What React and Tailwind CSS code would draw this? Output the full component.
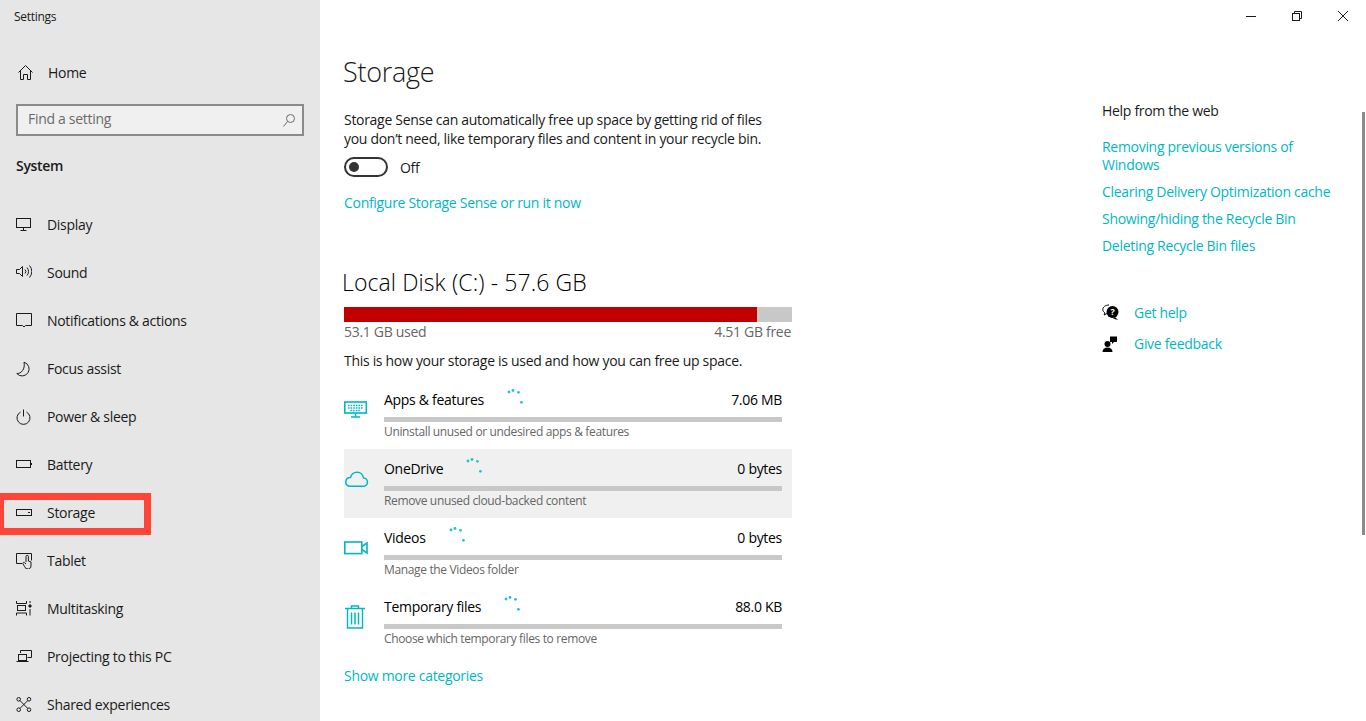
const NAV = [
  { label: 'Display', icon: <><rect x="0.5" y="1.5" width="14" height="9" /><path d="M7.5 10.5v3M4.5 13.5h6" /></> },
  { label: 'Sound', icon: <><path d="M0.5 4.5h3l3-3v10l-3-3h-3z" /><path d="M9 4.500a3 3 0 0 1 0 4M11 2.500a6 6 0 0 1 0 8M13.500 0.500a9 9 0 0 1 0 12" /></> },
  { label: 'Notifications & actions', icon: <path d="M0.5 0.5h15v12h-6l-1.5 1.5-1.500-1.500h-6z" /> },
  { label: 'Focus assist', icon: <path d="M8 1.200A7 7 0 1 1 0.800 12.500C5 13 9.500 8 8 1.200z" /> },
  { label: 'Power & sleep', icon: <><path d="M7.500 0.500v7" /><path d="M4.500 3.100a6.500 6.500 0 1 0 6 0" /></> },
  { label: 'Battery', icon: <><rect x="0.5" y="3.5" width="14" height="7" /><path d="M15.500 6v2" /></> },
  { label: 'Storage', icon: <><rect x="0.5" y="4.5" width="15" height="6" /><path d="M12 7.500h2" /></> },
  { label: 'Tablet', icon: <><path d="M6 10.500H0.500v-10h15v7" /><path d="M10 9V3.500a1.200 1.200 0 0 1 2.400 0V8l2.600 1v3a3.200 3.200 0 0 1-6.400 1.500L6.800 10.500a1 1 0 0 1 1.500-1L10 11" /></> },
  { label: 'Multitasking', icon: <><path d="M0.500 0v2.500h10V0M0.500 14.500V12h10v2.500" /><rect x="1.500" y="4.500" width="8" height="5" /><path d="M14 0v2M14 8v6.500" /><circle cx="14" cy="5" r="1.200" fill="currentColor" /></> },
  { label: 'Projecting to this PC', icon: <><path d="M4.500 4V1.500h11v7h-4" /><rect x="2.500" y="5.500" width="8" height="6" /><path d="M0.500 12.500h12" /></> },
  { label: 'Shared experiences', icon: <><circle cx="2.700" cy="2.300" r="1.800" /><circle cx="13" cy="2.300" r="1.800" /><circle cx="2.700" cy="12.700" r="1.800" /><circle cx="13" cy="12.700" r="1.800" /><path d="M4 3.600l7.700 7.800M11.700 3.600L4 11.400" /></> },
]

const CATEGORIES = [
  {
    name: 'Apps & features', size: '7.06 MB', hint: 'Uninstall unused or undesired apps & features',
    icon: <><rect x="0.800" y="4" width="21.500" height="11" strokeWidth="1.600" /><path d="M11.500 15v3.500M7 19h9" strokeWidth="1.400" /><path d="M4 7.500h15M4 10h15M6.500 12.500h10" strokeWidth="1.500" strokeDasharray="1.600 1" /></>,
  },
  {
    name: 'OneDrive', size: '0 bytes', hint: 'Remove unused cloud-backed content', shade: true,
    icon: <path d="M5 19.300h14a4.200 4.200 0 0 0 .5-8.400A6.600 6.600 0 0 0 6.500 10.500a4.500 4.500 0 0 0-1.500 8.800z" strokeWidth="1.500" />,
  },
  {
    name: 'Videos', size: '0 bytes', hint: 'Manage the Videos folder',
    icon: <><rect x="0.800" y="6" width="17" height="11.600" strokeWidth="1.600" /><path d="M17.800 10.500L23 7v10l-5.200-3.500" strokeWidth="1.600" /></>,
  },
  {
    name: 'Temporary files', size: '88.0 KB', hint: 'Choose which temporary files to remove',
    icon: <><path d="M1 3.500h20M3.500 3.500V23h15V3.500M7.500 3.500V1h7v2.500" strokeWidth="1.400" /><path d="M7.500 7.500v12M11 7.500v12M14.500 7.500v12" strokeWidth="1.500" /></>,
  },
]

function Ico({ children, className = '' }) {
  return (
    <svg width="16" height="16" viewBox="0 0 16 16" fill="none" stroke="currentColor" strokeWidth="1" className={`shrink-0 ${className}`}>
      {children}
    </svg>
  )
}

function Spinner() {
  return (
    <svg width="18" height="15" viewBox="0 0 18 15" className="shrink-0 self-start ml-[23px]" fill="#1fc4d1">
      <circle cx="2" cy="3" r="1.400" />
      <circle cx="6" cy="1.500" r="1.400" />
      <circle cx="11.400" cy="3.300" r="1.400" />
      <circle cx="14.400" cy="13.300" r="1.400" />
    </svg>
  )
}

function CategoryRow({ item }) {
  return (
    <div className={`h-[69px] flex ${item.shade ? 'bg-[#f0f0f0]' : ''}`}>
      <div className="w-[40px] pt-[18px] text-[#00b7c3]">
        <svg width="24" height="24" viewBox="0 0 24 24" fill="none" stroke="currentColor" className="overflow-visible">{item.icon}</svg>
      </div>
      <div className="w-[398px] pt-[9px]">
        <div className="flex items-center h-[21px] text-black">
          <span>{item.name}</span>
          <Spinner />
          <span className="ml-auto">{item.size}</span>
        </div>
        <div className="h-[5px] bg-[#c8c8c8] mt-[7px]" />
        <div className="text-[12px] leading-[16px] tracking-[-0.35px] text-[#666] mt-[2px]">{item.hint}</div>
      </div>
    </div>
  )
}

function Sidebar() {
  return (
    <aside className="w-[320px] shrink-0 bg-[#e6e6e6] h-full overflow-hidden text-[#1a1a1a]">
      <div className="h-[32px] pl-[14px] pt-[8px] text-[12px] leading-[17px]">Settings</div>
      <div className="mt-[17px] h-[48px] pl-[18px] flex items-center">
        <Ico>
          <path d="M0.500 7.500L7.500 0.500l7 7M2.500 5.500v9h3v-5h4v5h3v-9" />
        </Ico>
        <span className="ml-[14px] pb-[2px]">Home</span>
      </div>
      <div className="mt-[7px] mx-[16px] h-[32px] border-2 border-[#8a8a8a] bg-[#f0f0f0] flex items-center pl-[10px] pr-[7px] text-[#6b6b6b]">
        <span className="pb-[3px]">Find a setting</span>
        <Ico className="ml-auto text-[#6b6b6b]">
          <circle cx="11.500" cy="6.500" r="4" />
          <path d="M8.500 9.500l-4 5" />
        </Ico>
      </div>
      <div className="mt-[19px] h-[21px] pl-[16px] font-semibold leading-[21px]">System</div>
      <nav className="mt-[25px]">
        {NAV.map((n) => (
          <div key={n.label} className="h-[48px] pl-[16px] flex items-center">
            <Ico>{n.icon}</Ico>
            <span className="ml-[15px] pb-[2px]">{n.label}</span>
          </div>
        ))}
      </nav>
    </aside>
  )
}

export default function App() {
  return (
    <div className="relative w-[1366px] h-[721px] overflow-hidden bg-white flex font-['Open_Sans',sans-serif] text-[14px] leading-[19px] tracking-[-0.3px]">
      <Sidebar />

      <main className="w-[782px] shrink-0 pl-[24px]">
        <h1 className="mt-[52px] -ml-[1px] text-[27px] leading-[40px] font-light text-[#1a1a1a] tracking-[-0.3px]">Storage</h1>
        <p className="mt-[18px] w-[430px] text-[#1a1a1a]">
          Storage Sense can automatically free up space by getting rid of files you don’t need, like temporary files and content in your recycle bin.
        </p>
        <div className="mt-[9px] flex items-center h-[20px]">
          <div className="w-[44px] h-[20px] rounded-full border-2 border-[#333] flex items-center pl-[3px]">
            <div className="w-[10px] h-[10px] rounded-full bg-[#333]" />
          </div>
          <span className="ml-[12px] text-[#1a1a1a]">Off</span>
        </div>
        <a className="block mt-[16px] text-[#00b7c3]">Configure Storage Sense or run it now</a>

        <h2 className="mt-[54px] -ml-[2px] text-[23px] leading-[32px] font-light text-black tracking-[0.1px]">Local Disk (C:) - 57.6 GB</h2>
        <div className="mt-[9px] w-[448px] h-[15px] bg-[#c8c8c8]">
          <div className="h-full bg-[#c00000]" style={{ width: '92.2%' }} />
        </div>
        <div className="w-[448px] pr-[1px] flex justify-between text-[#666]">
          <span>53.1 GB used</span>
          <span>4.51 GB free</span>
        </div>
        <p className="mt-[10px] text-[#1a1a1a]">This is how your storage is used and how you can free up space.</p>

        <div className="mt-[10px] w-[448px]">
          {CATEGORIES.map((c) => <CategoryRow key={c.name} item={c} />)}
        </div>
        <a className="block mt-[10px] text-[#00b7c3]">Show more categories</a>
      </main>

      <section className="w-[240px] pt-[101px]">
        <div className="text-[#1a1a1a]">Help from the web</div>
        <div className="mt-[18px] text-[#00b7c3] w-[230px]">
          <a className="block leading-[18px]">Removing previous versions of Windows</a>
          <a className="block mt-[8px]">Clearing Delivery Optimization cache</a>
          <a className="block mt-[8px]">Showing/hiding the Recycle Bin</a>
          <a className="block mt-[8px]">Deleting Recycle Bin files</a>
        </div>
        <div className="mt-[48px] flex items-center h-[19px]">
          <svg width="17" height="17" viewBox="0 0 17 17" className="shrink-0">
            <path d="M7 1C3.500 1 .8 3 .8 5.500c0 1.500 1 2.700 2.200 3.500L2 11l3-1.500" fill="none" stroke="#000" />
            <circle cx="10.500" cy="8" r="6" fill="#000" />
            <path d="M13 13l3 3-5-1.500z" fill="#000" />
            <text x="10.500" y="11" textAnchor="middle" fontSize="9" fontWeight="700" fill="#fff">?</text>
          </svg>
          <a className="ml-[15px] text-[#00b7c3]">Get help</a>
        </div>
        <div className="mt-[12px] flex items-center h-[19px]">
          <svg width="16" height="16" viewBox="0 0 16 16" fill="#000" className="shrink-0">
            <circle cx="5.500" cy="8" r="3" />
            <path d="M0.500 16c0-3 2-4.500 5-4.500s5 1.500 5 4.500z" />
            <path d="M8 0.500h7V6h-3L10 8V6H8z" />
          </svg>
          <a className="ml-[16px] text-[#00b7c3]">Give feedback</a>
        </div>
      </section>

      {/* window controls sit over the page */}
      <div className="absolute right-0 top-0 flex h-[32px] text-[#1a1a1a]">
        {[
          <path key="min" d="M0 5.500h10" />,
          <g key="max"><rect x="0.500" y="2.500" width="7" height="7" /><path d="M2.500 2.500V0.500h7v7H7.500" /></g>,
          <path key="close" d="M0 0l10 10M10 0L0 10" />,
        ].map((p, i) => (
          <div key={i} className="w-[46px] flex items-center justify-center">
            <svg width="10" height="10" viewBox="0 0 10 10" fill="none" stroke="currentColor" strokeWidth="1">{p}</svg>
          </div>
        ))}
      </div>

      {/* scrollbar thumb */}
      <div className="absolute right-[1px] top-[112px] w-[3px] h-[423px] bg-[#8a8a8a]" />
      {/* red annotation box */}
      <div className="absolute left-0 top-[493px] w-[151px] h-[42px] border-[7px] border-l-[4px] border-[#ff4438]" />
    </div>
  )
}
